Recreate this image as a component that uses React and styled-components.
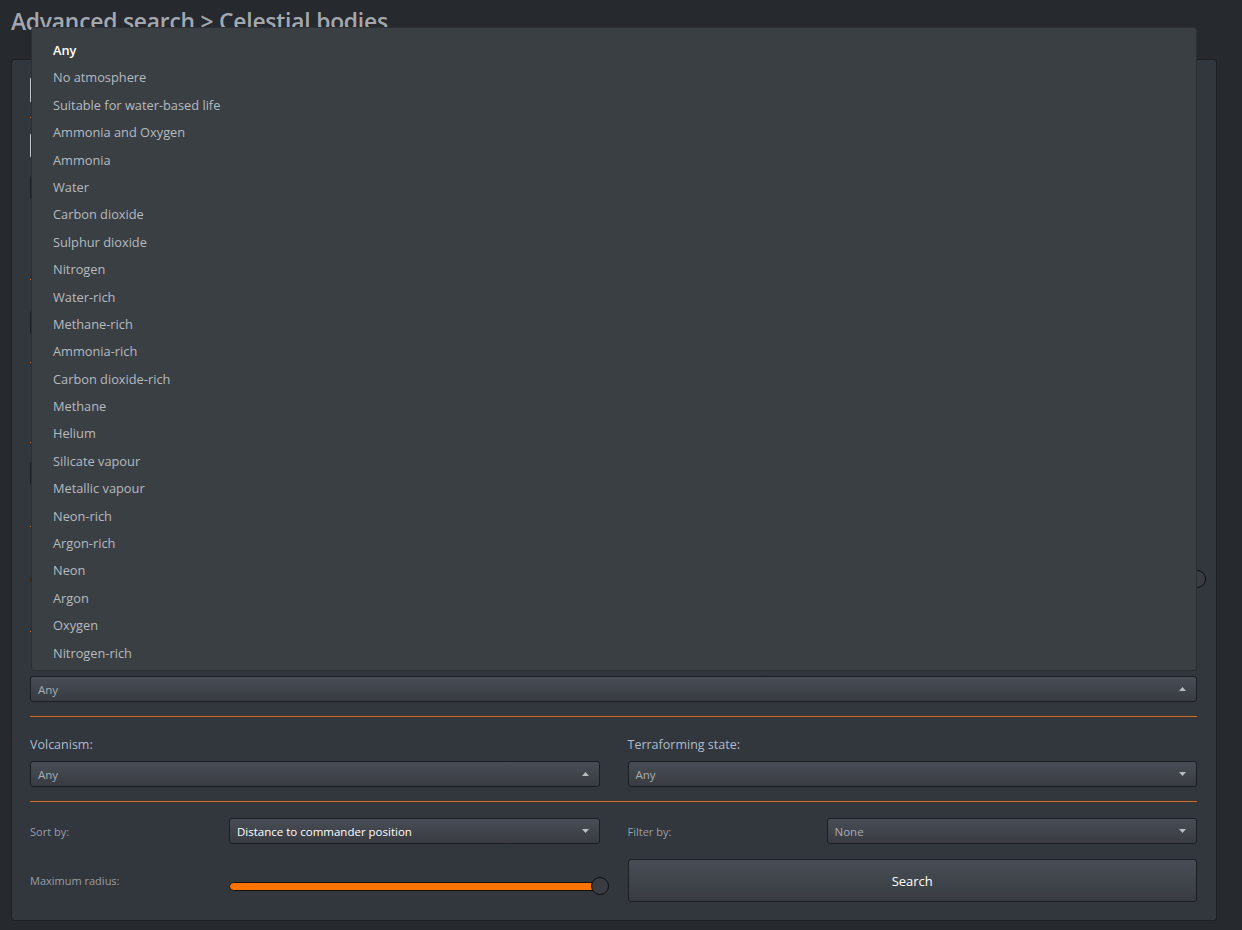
import React from "react";
import styled, { createGlobalStyle } from "styled-components";

const atmospheres = [
  "Any",
  "No atmosphere",
  "Suitable for water-based life",
  "Ammonia and Oxygen",
  "Ammonia",
  "Water",
  "Carbon dioxide",
  "Sulphur dioxide",
  "Nitrogen",
  "Water-rich",
  "Methane-rich",
  "Ammonia-rich",
  "Carbon dioxide-rich",
  "Methane",
  "Helium",
  "Silicate vapour",
  "Metallic vapour",
  "Neon-rich",
  "Argon-rich",
  "Neon",
  "Argon",
  "Oxygen",
  "Nitrogen-rich",
];

function Arrow({ up }) {
  return (
    <svg width="7" height="4" viewBox="0 0 7 4">
      <path d={up ? "M0 4 L3.5 0 L7 4 Z" : "M0 0 L7 0 L3.5 4 Z"} fill="#b9bcc0" />
    </svg>
  );
}

function App() {
  return (
    <>
      <GlobalStyle />
      <Page>
        <Title>Advanced search &gt; Celestial bodies</Title>
        <Panel>
          {/* fields lying under the open list, only their edges show */}
          <TextInput $h={26} $mb={14} />
          <Divider $mb={15} />
          <TextInput $h={25} $mb={17} />
          <Select $h={25} $mb={15} />
          <Label $h={14} $mb={50} />
          <Divider $mb={8} />
          <Label $h={14} $mb={8} />
          <Select $h={25} $mb={27} />
          <Divider $mb={6} />
          <Label $h={14} $mb={59} />
          <Divider $mb={5} />
          <Label $h={13} />
          <Select $h={25} $mb={40} />
          <Divider $mb={12} />
          <Label $h={14} $mb={14} />
          <SliderRow $h={24} $mb={40}>
            <Track />
            <Thumb />
          </SliderRow>
          <Divider $mb={23} />
          <Label $h={16} $mb={5} />

          <SelectWrap>
            <DropList>
              {atmospheres.map((a, i) => (
                <DropItem key={a} $active={i === 0}>
                  {a}
                </DropItem>
              ))}
            </DropList>
            <Select $h={26} $mb={14}>
              Any
              <Arrow up />
            </Select>
          </SelectWrap>
          <Divider $mb={20} />

          <Columns>
            <div>
              <Label $h={16} $mb={8}>Volcanism:</Label>
              <Select $h={26}>
                Any
                <Arrow up />
              </Select>
            </div>
            <div>
              <Label $h={16} $mb={8}>Terraforming state:</Label>
              <Select $h={26}>
                Any
                <Arrow />
              </Select>
            </div>
          </Columns>
          <Divider $mt={14} $mb={16} />

          <Columns>
            <ControlGrid>
              <SmallLabel>Sort by:</SmallLabel>
              <Select $h={26} $bright>
                Distance to commander position
                <Arrow />
              </Select>
              <SmallLabel>Maximum radius:</SmallLabel>
              <SliderRow $h={32} $end>
                <Track />
                <Thumb />
              </SliderRow>
            </ControlGrid>
            <ControlGrid>
              <SmallLabel>Filter by:</SmallLabel>
              <Select $h={26}>
                None
                <Arrow />
              </Select>
              <SearchButton>Search</SearchButton>
            </ControlGrid>
          </Columns>
        </Panel>
      </Page>
    </>
  );
}

const GlobalStyle = createGlobalStyle`
  html, body {
    margin: 0;
    background: #26292e;
  }
  body {
    font-family: "Open Sans", "Liberation Sans", sans-serif;
  }
`;

const Page = styled.div`
  width: 1242px;
  height: 930px;
  box-sizing: border-box;
  padding: 0 25px 0 11px;
  overflow: hidden;
`;

const Title = styled.h1`
  margin: 0;
  height: 59px;
  padding-top: 6px;
  box-sizing: border-box;
  font-size: 22.8px;
  line-height: 31px;
  font-weight: 600;
  color: #a3a8ae;
  letter-spacing: -0.2px;
`;

const Panel = styled.div`
  background: #32363d;
  border: 1px solid #1c1f23;
  border-radius: 3px;
  padding: 17px 19px 18px 18px;
  display: flex;
  flex-direction: column;
`;

const Divider = styled.div`
  height: 1px;
  flex: none;
  background: #d86b1e;
  margin-top: ${(p) => p.$mt || 0}px;
  margin-bottom: ${(p) => p.$mb || 0}px;
`;

const Label = styled.div`
  height: ${(p) => p.$h}px;
  margin-bottom: ${(p) => p.$mb || 0}px;
  font-size: 12.5px;
  line-height: ${(p) => p.$h}px;
  color: #aebccb;
`;

const SmallLabel = styled.div`
  font-size: 11px;
  color: #989ea5;
  align-self: center;
`;

const TextInput = styled.div`
  height: ${(p) => p.$h}px;
  margin-bottom: ${(p) => p.$mb || 0}px;
  box-sizing: border-box;
  border: 1px solid #c3c6ca;
  border-radius: 2px;
  background: #3a3e44;
`;

const Select = styled.div`
  height: ${(p) => p.$h}px;
  margin-bottom: ${(p) => p.$mb || 0}px;
  box-sizing: border-box;
  border: 1px solid #1b1e22;
  border-radius: 3px;
  background: linear-gradient(#484c54, #383c42);
  padding: 0 10px 0 7px;
  display: flex;
  align-items: center;
  justify-content: space-between;
  font-size: 11.5px;
  color: ${(p) => (p.$bright ? "#ffffff" : "#a9adb2")};
`;

const SelectWrap = styled.div`
  position: relative;
`;

const DropList = styled.div`
  position: absolute;
  left: 1px;
  right: 0;
  bottom: calc(100% + 5px);
  z-index: 5;
  background: #3a3f44;
  border: 1px solid #2c3035;
  border-radius: 3px;
  padding: 9px 0 3px;
`;

const DropItem = styled.div`
  height: 27.4px;
  line-height: 27.4px;
  padding-left: 21px;
  font-size: 12.8px;
  color: ${(p) => (p.$active ? "#ffffff" : "#b6babf")};
  font-weight: ${(p) => (p.$active ? 600 : 400)};
`;

const Columns = styled.div`
  display: grid;
  grid-template-columns: 1fr 1fr;
  column-gap: 28px;
`;

const ControlGrid = styled.div`
  display: grid;
  grid-template-columns: 199px 1fr;
  grid-template-rows: 26px 43px;
  row-gap: 15px;
`;

const SliderRow = styled.div`
  position: relative;
  height: ${(p) => p.$h}px;
  margin-bottom: ${(p) => p.$mb || 0}px;
  align-self: ${(p) => (p.$end ? "end" : "auto")};
  display: flex;
  align-items: center;
`;

const Track = styled.div`
  flex: 1;
  height: 9px;
  box-sizing: border-box;
  background: #ff7300;
  border: 1px solid #111;
  border-radius: 5px;
`;

const Thumb = styled.div`
  position: absolute;
  right: -9px;
  top: 50%;
  width: 18px;
  height: 18px;
  margin-top: -9px;
  box-sizing: border-box;
  border-radius: 50%;
  background: #393d43;
  border: 1px solid #0e0f11;
`;

const SearchButton = styled.button`
  grid-column: 1 / 3;
  height: 43px;
  border: 1px solid #1b1e22;
  border-radius: 3px;
  background: linear-gradient(#484c54, #383c42);
  color: #ffffff;
  font-family: inherit;
  font-size: 13px;
`;

export default App;
